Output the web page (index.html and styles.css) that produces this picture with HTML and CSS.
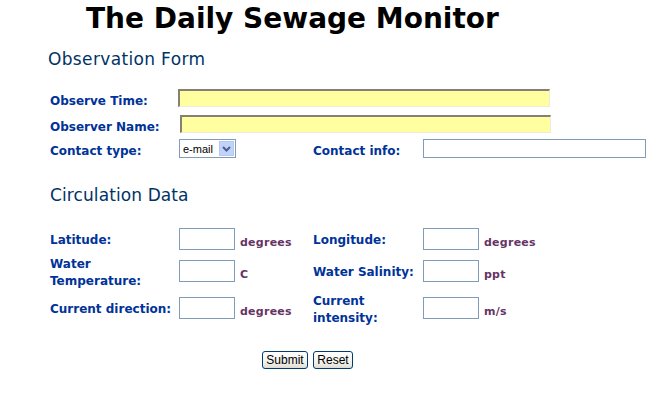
FILE: index.html
```html
<!DOCTYPE html>
<html>
<head>
<meta charset="utf-8">
<title>The Daily Sewage Monitor</title>
<link rel="stylesheet" href="styles.css">
</head>
<body>
<h1 class="title">The Daily Sewage Monitor</h1>
<form class="form">
  <h2 class="section first">Observation Form</h2>
  <div class="row obs-1">
    <label class="lbl">Observe Time:</label>
    <input class="yellow wide1" type="text">
  </div>
  <div class="row obs-2">
    <label class="lbl">Observer Name:</label>
    <input class="yellow wide2" type="text">
  </div>
  <div class="row obs-3">
    <label class="lbl">Contact type:</label>
    <div class="select"><span class="sel-text">e-mail</span><span class="sel-btn"><svg width="9" height="6" viewBox="0 0 9 6"><path d="M1 1 L4.5 4.5 L8 1" fill="none" stroke="#4d6185" stroke-width="2"/></svg></span></div>
    <span></span>
    <label class="lbl">Contact info:</label>
    <input class="plain info" type="text">
  </div>

  <h2 class="section second">Circulation Data</h2>
  <div class="row circ circ-1">
    <label class="lbl">Latitude:</label>
    <input class="plain small" type="text">
    <span class="unit">degrees</span>
    <label class="lbl">Longitude:</label>
    <input class="plain small" type="text">
    <span class="unit">degrees</span>
  </div>
  <div class="row circ circ-2">
    <label class="lbl">Water<br>Temperature:</label>
    <input class="plain small" type="text">
    <span class="unit">C</span>
    <label class="lbl">Water Salinity:</label>
    <input class="plain small" type="text">
    <span class="unit">ppt</span>
  </div>
  <div class="row circ circ-3">
    <label class="lbl">Current direction:</label>
    <input class="plain small" type="text">
    <span class="unit">degrees</span>
    <label class="lbl">Current<br>intensity:</label>
    <input class="plain small" type="text">
    <span class="unit">m/s</span>
  </div>
  <div class="buttons">
    <button type="button" class="btn submit">Submit</button>
    <button type="reset" class="btn reset">Reset</button>
  </div>
</form>
</body>
</html>
```
FILE: styles.css
```css
html, body {
  margin: 0;
  padding: 0;
  background: #ffffff;
}
body {
  font-family: "DejaVu Sans", Verdana, sans-serif;
}
.title {
  margin: 0;
  padding: 3px 0 0 86px;
  font-size: 28px;
  font-weight: bold;
  color: #000000;
  line-height: 32px;
}
.form {
  margin: 0;
}
.section {
  margin: 0;
  font-weight: normal;
  font-size: 17px;
  letter-spacing: 0.35px;
  color: #003366;
  line-height: 20px;
}
.section.first {
  padding: 14px 0 0 48px;
}
.section.second {
  padding: 0 0 0 50px;
  margin-top: 27px;
  letter-spacing: 0.1px;
}
.row {
  display: grid;
  grid-template-columns: 129px 56px 78px 110px 56px auto;
  padding-left: 50px;
  align-items: center;
}
.obs-1 {
  margin-top: 20px;
  height: 18px;
  grid-template-rows: 18px;
}
.obs-2 {
  margin-top: 8px;
  height: 18px;
  grid-template-rows: 18px;
}
.obs-3 {
  margin-top: 6px;
  height: 19px;
  grid-template-rows: 19px;
}
.circ {
  height: 22px;
  grid-template-rows: 22px;
}
.circ-1 {
  margin-top: 23px;
}
.circ-2 {
  margin-top: 10px;
}
.circ-3 {
  margin-top: 15px;
}
.lbl {
  font-size: 12px;
  font-weight: bold;
  color: #003399;
  line-height: 17px;
  white-space: nowrap;
}
.obs-1 .lbl,
.obs-2 .lbl,
.obs-3 .lbl {
  padding-top: 6px;
}
.circ .lbl {
  padding-top: 3px;
}
.yellow {
  box-sizing: border-box;
  height: 18px;
  margin: 0;
  padding: 0;
  background: #ffffa0;
  border-top: 2px solid #858172;
  border-left: 2px solid #858172;
  border-right: 1px solid #efecdc;
  border-bottom: 1px solid #efecdc;
}
.wide1 {
  grid-column: 2 / 7;
  width: 372px;
  margin-left: -1px;
}
.wide2 {
  grid-column: 2 / 7;
  width: 371px;
  margin-left: 1px;
}
.plain {
  box-sizing: border-box;
  margin: 0;
  padding: 0;
  background: #ffffff;
  border: 1px solid #7f9db9;
}
.info {
  grid-column: 5 / 7;
  width: 223px;
  height: 19px;
}
.select {
  box-sizing: border-box;
  width: 57px;
  height: 19px;
  border: 1px solid #7f9db9;
  background: #ffffff;
  display: flex;
  align-items: center;
  justify-content: space-between;
  padding: 1px;
}
.sel-text {
  font-family: "Liberation Sans", Arial, sans-serif;
  font-size: 11px;
  color: #000000;
  padding-left: 2px;
}
.sel-btn {
  width: 15px;
  height: 15px;
  box-sizing: border-box;
  background: #c1d3fb;
  border: 1px solid #b5c8f2;
  display: flex;
  align-items: center;
  justify-content: center;
}
.small {
  width: 56px;
  height: 22px;
}
.unit {
  font-size: 11px;
  font-weight: bold;
  letter-spacing: 0.25px;
  color: #663366;
  padding-left: 5px;
  padding-top: 8px;
  line-height: 14px;
}
.buttons {
  display: flex;
  gap: 5px;
  padding-left: 262px;
  margin-top: 32px;
}
.btn {
  box-sizing: border-box;
  height: 18px;
  margin: 0;
  padding: 0;
  font-family: "Liberation Sans", Arial, sans-serif;
  font-size: 12px;
  color: #000000;
  background: linear-gradient(#ffffff, #f0f0ea 70%, #dcdcd4);
  border: 1px solid #003c74;
  border-radius: 3px;
  line-height: 15px;
}
.submit {
  width: 46px;
}
.reset {
  width: 40px;
}
```
